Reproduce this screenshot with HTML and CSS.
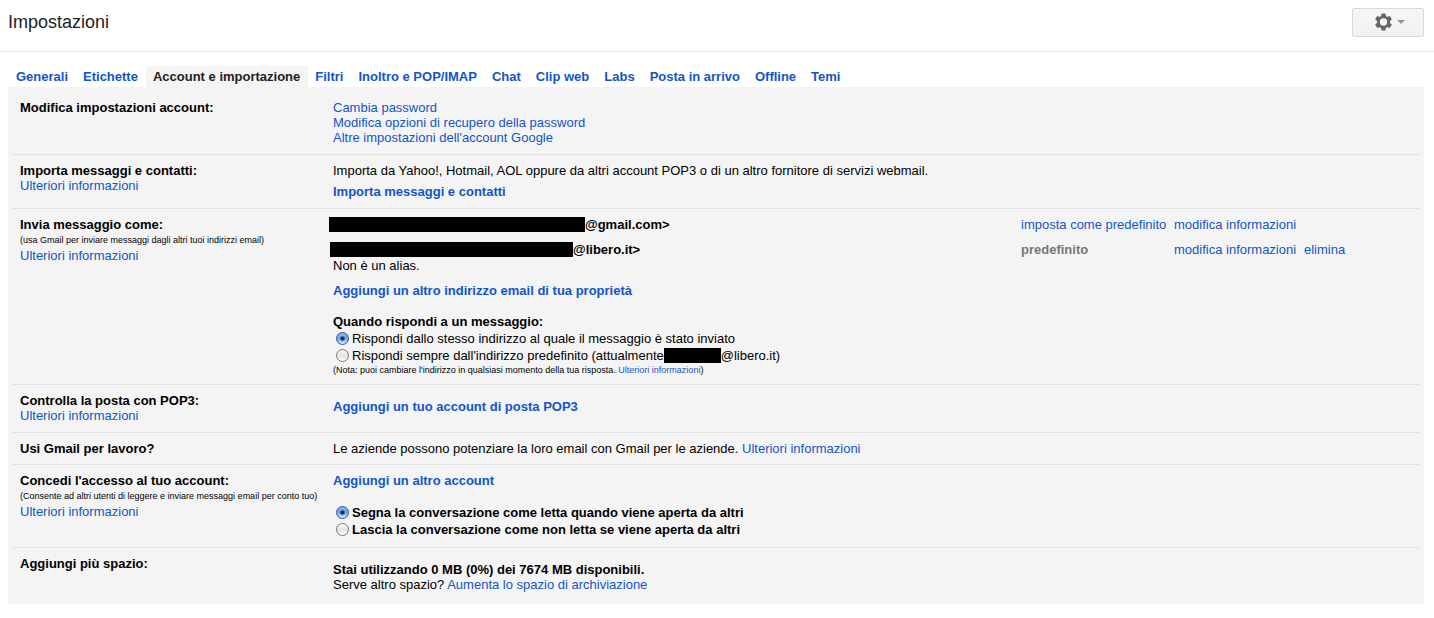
FILE: index.html
```html
<!DOCTYPE html>
<html lang="it">
<head>
<meta charset="utf-8">
<title>Impostazioni</title>
<link rel="stylesheet" href="styles.css">
</head>
<body>
<header class="header">
  <h1 class="title">Impostazioni</h1>
  <button class="gear-button" type="button" aria-label="Impostazioni">
    <svg width="17" height="18" viewBox="0 0 17 18" aria-hidden="true">
      <g fill="#666" transform="translate(8.5 9)">
        <path fill-rule="evenodd" d="M0-6.5A6.500 6.500 0 1 1 0 6.500A6.500 6.500 0 1 1 0-6.500ZM0-3.700A3.700 3.700 0 1 0 0 3.700A3.700 3.700 0 1 0 0-3.700Z"/>
        <path id="tooth" d="M-2.500-5.500L-1.900-8.500H1.900L2.500-5.500Z"/>
        <use href="#tooth" transform="rotate(60)"/>
        <use href="#tooth" transform="rotate(120)"/>
        <use href="#tooth" transform="rotate(180)"/>
        <use href="#tooth" transform="rotate(240)"/>
        <use href="#tooth" transform="rotate(300)"/>
      </g>
    </svg>
    <svg width="8" height="4" viewBox="0 0 8 4" aria-hidden="true"><path d="M0 0H8L4 4Z" fill="#999"/></svg>
  </button>
</header>

<nav class="tabs">
  <a class="tab" href="#">Generali</a>
  <a class="tab" href="#">Etichette</a>
  <a class="tab tab-active" href="#" aria-current="page">Account e importazione</a>
  <a class="tab" href="#">Filtri</a>
  <a class="tab" href="#">Inoltro e POP/IMAP</a>
  <a class="tab" href="#">Chat</a>
  <a class="tab" href="#">Clip web</a>
  <a class="tab" href="#">Labs</a>
  <a class="tab" href="#">Posta in arrivo</a>
  <a class="tab" href="#">Offline</a>
  <a class="tab" href="#">Temi</a>
</nav>

<main class="panel">
  <section class="row">
    <div class="label"><h2 class="name">Modifica impostazioni account:</h2></div>
    <div class="content stack">
      <a href="#">Cambia password</a>
      <a href="#">Modifica opzioni di recupero della password</a>
      <a href="#">Altre impostazioni dell'account Google</a>
    </div>
  </section>

  <section class="row">
    <div class="label">
      <h2 class="name">Importa messaggi e contatti:</h2>
      <a href="#">Ulteriori informazioni</a>
    </div>
    <div class="content stack stack-spaced">
      <p>Importa da Yahoo!, Hotmail, AOL oppure da altri account POP3 o di un altro fornitore di servizi webmail.</p>
      <a class="strong" href="#">Importa messaggi e contatti</a>
    </div>
  </section>

  <section class="row row-compact">
    <div class="label">
      <h2 class="name">Invia messaggio come:</h2>
      <p class="hint">(usa Gmail per inviare messaggi dagli altri tuoi indirizzi email)</p>
      <a href="#">Ulteriori informazioni</a>
    </div>
    <div class="content">
      <table class="addresses">
        <tbody>
          <tr>
            <td class="strong"><span class="redacted redacted-long"></span>@gmail.com&gt;</td>
            <td class="col-default"><a href="#">imposta come predefinito</a></td>
            <td class="col-edit"><a href="#">modifica informazioni</a></td>
            <td class="col-delete"></td>
          </tr>
          <tr>
            <td><span class="strong"><span class="redacted redacted-medium"></span>@libero.it&gt;</span><p class="alias">Non è un alias.</p></td>
            <td class="col-default"><span class="muted">predefinito</span></td>
            <td class="col-edit"><a href="#">modifica informazioni</a></td>
            <td class="col-delete"><a href="#">elimina</a></td>
          </tr>
        </tbody>
      </table>
      <a class="strong" href="#">Aggiungi un altro indirizzo email di tua proprietà</a>
      <fieldset class="choices">
        <legend class="legend">Quando rispondi a un messaggio:</legend>
        <div class="choice"><input class="radio" type="radio" name="reply" id="reply-same" checked><label for="reply-same">Rispondi dallo stesso indirizzo al quale il messaggio è stato inviato</label></div>
        <div class="choice"><input class="radio" type="radio" name="reply" id="reply-default"><label for="reply-default">Rispondi sempre dall'indirizzo predefinito (attualmente<span class="redacted redacted-short"></span>@libero.it)</label></div>
      </fieldset>
      <p class="note">(Nota: puoi cambiare l'indirizzo in qualsiasi momento della tua risposta. <a href="#">Ulteriori informazioni</a>)</p>
    </div>
  </section>

  <section class="row">
    <div class="label">
      <h2 class="name">Controlla la posta con POP3:</h2>
      <a href="#">Ulteriori informazioni</a>
    </div>
    <div class="content content-lowered"><a class="strong" href="#">Aggiungi un tuo account di posta POP3</a></div>
  </section>

  <section class="row row-compact">
    <div class="label"><h2 class="name">Usi Gmail per lavoro?</h2></div>
    <div class="content"><p>Le aziende possono potenziare la loro email con Gmail per le aziende. <a href="#">Ulteriori informazioni</a></p></div>
  </section>

  <section class="row">
    <div class="label">
      <h2 class="name">Concedi l'accesso al tuo account:</h2>
      <p class="hint">(Consente ad altri utenti di leggere e inviare messaggi email per conto tuo)</p>
      <a href="#">Ulteriori informazioni</a>
    </div>
    <div class="content">
      <a class="strong" href="#">Aggiungi un altro account</a>
      <fieldset class="choices strong">
        <div class="choice"><input class="radio" type="radio" name="mark" id="mark-read" checked><label for="mark-read">Segna la conversazione come letta quando viene aperta da altri</label></div>
        <div class="choice"><input class="radio" type="radio" name="mark" id="mark-unread"><label for="mark-unread">Lascia la conversazione come non letta se viene aperta da altri</label></div>
      </fieldset>
    </div>
  </section>

  <section class="row">
    <div class="label"><h2 class="name">Aggiungi più spazio:</h2></div>
    <div class="content content-lowered">
      <p class="strong">Stai utilizzando 0 MB (0%) dei 7674 MB disponibili.</p>
      <p>Serve altro spazio? <a href="#">Aumenta lo spazio di archiviazione</a></p>
    </div>
  </section>
</main>
</body>
</html>
```

FILE: styles.css
```css
* { box-sizing: border-box; }

body {
  margin: 0;
  background: #fff;
  color: #000;
  font: 13px/15px "Liberation Sans", Arial, sans-serif;
}

p, h1, h2 { margin: 0; }

a { color: #15c; text-decoration: none; }
a:hover { text-decoration: underline; }

.header {
  display: flex;
  align-items: flex-start;
  justify-content: space-between;
  padding: 8px 10px 14px 8px;
  border-bottom: 1px solid #e5e5e5;
}

.title { color: #222; font-size: 18px; font-weight: normal; line-height: 29px; }

.gear-button {
  display: flex;
  align-items: center;
  justify-content: center;
  gap: 5px;
  width: 72px;
  height: 29px;
  padding: 0 0 2px 4px;
  border: 1px solid #d8d8d8;
  border-radius: 2px;
  background: linear-gradient(#f6f6f6, #f1f1f1);
}

.tabs { display: flex; padding: 14px 9px 0; }
.tab { padding: 3px 8px 3px 7px; font-weight: bold; white-space: nowrap; }
.tab-active { background: #f4f4f4; color: #222; }

.panel {
  margin: 0 10px 0 8px;
  padding: 5px 4px 4px;
  background: #f4f4f4;
}

.row {
  display: grid;
  grid-template-columns: 313px 1fr;
  padding: 8px 8px 9px;
  border-bottom: 1px solid #e2e2e2;
}
.row-compact { padding-bottom: 8px; }
.row:last-child { padding-bottom: 8px; border-bottom: 0; }

.name { font-size: 13px; font-weight: bold; }
.strong { font-weight: bold; }
.muted { color: #777; font-weight: bold; }
.hint { padding-top: 1px; font-size: 9px; white-space: nowrap; }
.note { padding-top: 1px; font-size: 9px; line-height: 11px; }

.stack { display: flex; flex-direction: column; align-items: flex-start; }
.stack-spaced { gap: 6px; }
.content-lowered { padding-top: 6px; }

.addresses { width: 100%; margin-bottom: 10px; border-collapse: collapse; }
.addresses td { padding: 0 0 10px; vertical-align: top; }
.addresses tr:last-child td { padding-bottom: 0; }
.addresses .col-default { width: 153px; }
.addresses .col-edit { width: 130px; }
.addresses .col-delete { width: 108px; }
.alias { padding-top: 1px; }

.redacted { display: inline-block; height: 15px; background: #000; vertical-align: top; }
.redacted-long { width: 256px; margin-left: -4px; }
.redacted-medium { width: 243px; margin-left: -3px; }
.redacted-short { width: 57px; }

.choices { margin: 16px 0 0; padding: 0; border: 0; }
.legend { padding: 0 0 1px; font-weight: bold; }
.choice { display: flex; align-items: center; gap: 3px; height: 17px; }

.radio {
  width: 13px;
  height: 13px;
  margin: 0 0 0 3px;
  border: 1px solid #777;
  border-radius: 50%;
  appearance: none;
  background: linear-gradient(#fff, #e2e2e2 50%, #fff);
}
.radio:checked {
  border-color: #33519b;
  background: radial-gradient(circle, #102448 0 1px, transparent 3px), linear-gradient(#8fb6ea, #6ba6e8 50%, #cff0ff);
}
```
